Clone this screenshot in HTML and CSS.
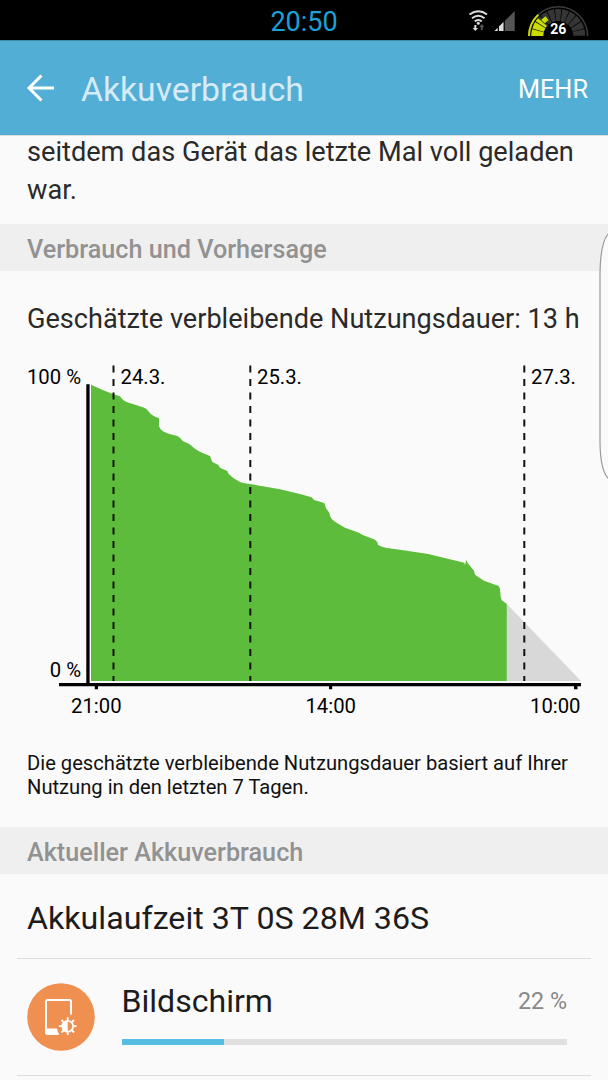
FILE: index.html
```html
<!DOCTYPE html>
<html lang="de">
<head>
    <meta charset="UTF-8">
    <meta name="viewport" content="width=device-width, initial-scale=1.0">
    <title>Akkuverbrauch</title>
    <link rel="stylesheet" href="styles.css">
</head>
<body>
    <div class="status-bar">
        <span class="clock">20:50</span>
        <svg class="status-icons" width="128" height="40" viewBox="468 0 128 40">
            <!-- wifi -->
            <g fill="none" stroke="#ddd" stroke-width="2">
                <path d="M469.500 13.500q9-6.500 17.500 0"/>
                <path d="M472 17.200q6.300-5 12.500 0"/>
                <path d="M474.800 20.400q3.500-2.800 7 0"/>
            </g>
            <circle cx="478.300" cy="22.200" r="1.500" fill="#ddd"/>
            <path d="M474.300 24h2v3h1.700l-2.700 3-2.700-3h1.700z" fill="#ddd"/>
            <path d="M480.800 29h2v-3h1.500l-2.500-3-2.500 3h1.500z" fill="#555"/>
            <!-- signal -->
            <path d="M494.500 30l20.200-20v20z" fill="#555"/>
            <path d="M494.500 30l3-3v3zM498.800 30v-4.500l1-1V30zM499.800 30v-5.300l3.700-3.700V30z" fill="#ddd"/>
            <path d="M498.500 22v8M504.300 18v12" stroke="#000" stroke-width="1"/>
            <!-- battery gauge -->
            <g fill="none">
                <path d="M529 35a29.300 29.300 0 0 1 58.600 0" stroke="#3b3b3b" stroke-width="1.600"/>
                <path d="M529 35a29.300 29.300 0 0 1 9.300-21.300" stroke="#cbdc00" stroke-width="2"/>
                <path d="M537.300 35a21 21 0 0 1 42 0" stroke="#353535" stroke-width="12" stroke-dasharray="5.300 .7"/>
                <path d="M537.300 35a21 21 0 0 1 5.200-13.900" stroke="#cbdc00" stroke-width="12" stroke-dasharray="5.300 .7"/>
                <path d="M543 20.700a21 21 0 0 1 4-3.500" stroke="#cbdc00" stroke-width="5"/>
            </g>
            <text class="gauge-value" x="558.300" y="33" text-anchor="middle">26</text>
        </svg>
    </div>

    <header class="app-bar">
        <svg class="back" width="28" height="28" viewBox="0 0 28 28">
            <path d="M28 14H3M15.500 1.500L3 14l12.500 12.500" fill="none" stroke="#fff" stroke-width="3"/>
        </svg>
        <h1>Akkuverbrauch</h1>
        <span class="more">MEHR</span>
    </header>

    <main>
        <p class="intro">seitdem das Gerät das letzte Mal voll geladen<br>war.</p>

        <h2 class="section-title">Verbrauch und Vorhersage</h2>
        <p class="estimate">Geschätzte verbleibende Nutzungsdauer: 13 h</p>

        <svg class="chart" width="608" height="380" viewBox="0 350 608 380">
            <path fill="#d8d8d8" d="M506.500 603.700L581 681h-74.500z"/>
            <path fill="#5ebc3d" d="M91 681V384.700L103.300 390.300Q112 394 120 396.300Q123 401 128 402.500L143 407.200Q147 408.500 149 412Q152 416 159 418.300V426Q159.500 429 163.300 431.500Q167 433.500 177.300 436Q181 438 183 441.300Q188 443 190.700 445Q196 451 210 456L212.300 462L218.300 465L220 467.700L227.300 471L228.700 474Q232 477.500 238.300 481Q241 483 250 484L280 489.300L300 494L311.700 497.300L314 500L324.300 503L326 508.300L329.300 512.700Q330 517 332 519.300Q336 523 345 527.700L359 532.700L363.300 535.300L374 539.300Q378 541.500 378 545Q382 547 386.700 548L400 549.700L428.300 554L464.300 562.700L465 565.300L466.200 560L468 563.500L474 570.700L475 574.700L484 580.700L498.700 586Q500 588 500.300 592Q500.700 600 502.500 600.700L506.800 604V681z"/>
            <g stroke="#111" stroke-width="2" stroke-dasharray="7 6.500">
                <path d="M113.500 365.500V681"/>
                <path d="M250.300 365.500V681"/>
                <path d="M524.300 365.500V681"/>
            </g>
            <path fill="#000" d="M86.300 384.300h3.300V683H581v3.300h-3.500v3H574v-3H332.200v3H329v-3H98v3h-3.200v-3H59V683h27.300z"/>
            <g class="chart-labels">
                <text x="81" y="384.400" text-anchor="end">100 %</text>
                <text x="81" y="677.400" text-anchor="end">0 %</text>
                <text x="120.500" y="384.400">24.3.</text>
                <text x="257" y="384.400">25.3.</text>
                <text x="531" y="384.400">27.3.</text>
                <text x="96.300" y="713" text-anchor="middle">21:00</text>
                <text x="330.700" y="713" text-anchor="middle">14:00</text>
                <text x="580.500" y="713" text-anchor="end">10:00</text>
            </g>
        </svg>

        <p class="note">Die geschätzte verbleibende Nutzungsdauer basiert auf Ihrer<br>Nutzung in den letzten 7 Tagen.</p>

        <h2 class="section-title">Aktueller Akkuverbrauch</h2>
        <p class="runtime">Akkulaufzeit 3T 0S 28M 36S</p>

        <div class="usage-item">
            <svg class="usage-icon" width="68" height="68" viewBox="0 0 68 68">
                <circle cx="34" cy="34" r="33.800" fill="#f09050"/>
                <path d="M44 31.500V18.500q0-1.500-1.500-1.500h-22q-1.500 0-1.500 1.500v31q0 1.500 1.500 1.500H31" fill="none" stroke="#fff" stroke-width="2"/>
                <path d="M19 45.500h11q.5 3.500 2.500 6H20.500l-1.500-1.500z" fill="#fff"/>
                <g stroke="#fff" stroke-width="1.800">
                    <path d="M40.700 34.300v3M40.700 49v3M31.900 43.200h3M46.500 43.200h3M34.500 37l2 2M45 47.500l2 2M34.500 49.500l2-2M45 39l2-2"/>
                    <circle cx="40.700" cy="43.200" r="5.400" fill="none"/>
                </g>
                <path d="M40.700 37.800a5.400 5.400 0 0 0 0 10.800z" fill="#fff"/>
            </svg>
            <div class="usage-body">
                <div class="usage-head">
                    <span class="usage-name">Bildschirm</span>
                    <span class="usage-percent">22 %</span>
                </div>
                <div class="bar"><div class="bar-fill" style="width: 23%"></div></div>
            </div>
        </div>
    </main>

    <!-- edge panel handle -->
    <svg class="edge-handle" width="9" height="250" viewBox="0 0 9 250">
        <path d="M10 2Q1.500 10 1 42V212Q1.500 241 10 248" fill="#fafafa" stroke="#999" stroke-width="1.200"/>
    </svg>
</body>
</html>
```

FILE: styles.css
```css
* {
    box-sizing: border-box;
}
body {
    margin: 0;
    width: 608px;
    height: 1080px;
    overflow: hidden;
    position: relative;
    background-color: #fafafa;
    color: #2a2a2a;
    font-family: Roboto, sans-serif;
}
h1, h2, p {
    margin: 0;
    font-weight: normal;
    white-space: nowrap;
}
svg {
    display: block;
}
.status-bar {
    height: 40px;
    background-color: #000;
    display: grid;
    grid-template-columns: 1fr auto 1fr;
    align-items: center;
}
.clock {
    grid-column: 2;
    color: #1ba1d8;
    font-size: 27px;
    line-height: 40px;
    padding-top: 2px;
}
.status-icons {
    justify-self: end;
    margin-right: 12px;
}
.gauge-value {
    fill: #fff;
    font-size: 14px;
    font-weight: bold;
}
.app-bar {
    height: 96px;
    padding: 0 20px 0 26px;
    display: flex;
    align-items: center;
    background-color: #53aed5;
    border-top: 1px solid #3f8aa9;
    border-bottom: 1px solid #ddd;
    color: #fff;
}
.app-bar h1 {
    flex: 1;
    margin-left: 27px;
    padding-top: 3px;
    font-size: 33.700px;
    color: #d6ebf5;
}
.more {
    font-size: 25.300px;
    padding-top: 2px;
}
/* scrolled slightly under the app bar */
.intro {
    height: 91px;
    margin-top: -3px;
    padding: 0 27px;
    font-size: 27.150px;
    line-height: 38px;
}
.section-title {
    height: 47px;
    padding-left: 27px;
    background-color: #efefef;
    color: #929292;
    font-size: 25.200px;
    font-weight: 500;
    line-height: 51px;
}
.estimate {
    height: 79px;
    padding-left: 27px;
    font-size: 27.100px;
    line-height: 97px;
}
.chart-labels {
    font-size: 20.300px;
    fill: #000;
}
.note {
    height: 97px;
    padding: 21px 27px 0;
    color: #111;
    font-size: 20.170px;
    line-height: 24px;
}
.runtime {
    height: 85px;
    margin: 0 17px;
    padding-left: 10px;
    border-bottom: 1px solid #ddd;
    color: #1c1c1c;
    font-size: 32.200px;
    line-height: 88px;
}
.usage-item {
    height: 117px;
    margin: 0 17px;
    padding: 0 24px 0 10px;
    display: flex;
    align-items: center;
    border-bottom: 1px solid #ddd;
}
.usage-body {
    flex: 1;
    margin-left: 26.500px;
    padding-bottom: 7px;
}
.usage-head {
    display: flex;
    justify-content: space-between;
    align-items: center;
    line-height: 36px;
}
.usage-name {
    color: #1c1c1c;
    font-size: 32.100px;
}
.usage-percent {
    color: #888;
    font-size: 23.300px;
}
.bar {
    height: 6px;
    margin-top: 20px;
    background-color: #e1e0e0;
}
.bar-fill {
    height: 6px;
    background-color: #56bde2;
}
.edge-handle {
    position: absolute;
    top: 231px;
    right: 0;
}
```
